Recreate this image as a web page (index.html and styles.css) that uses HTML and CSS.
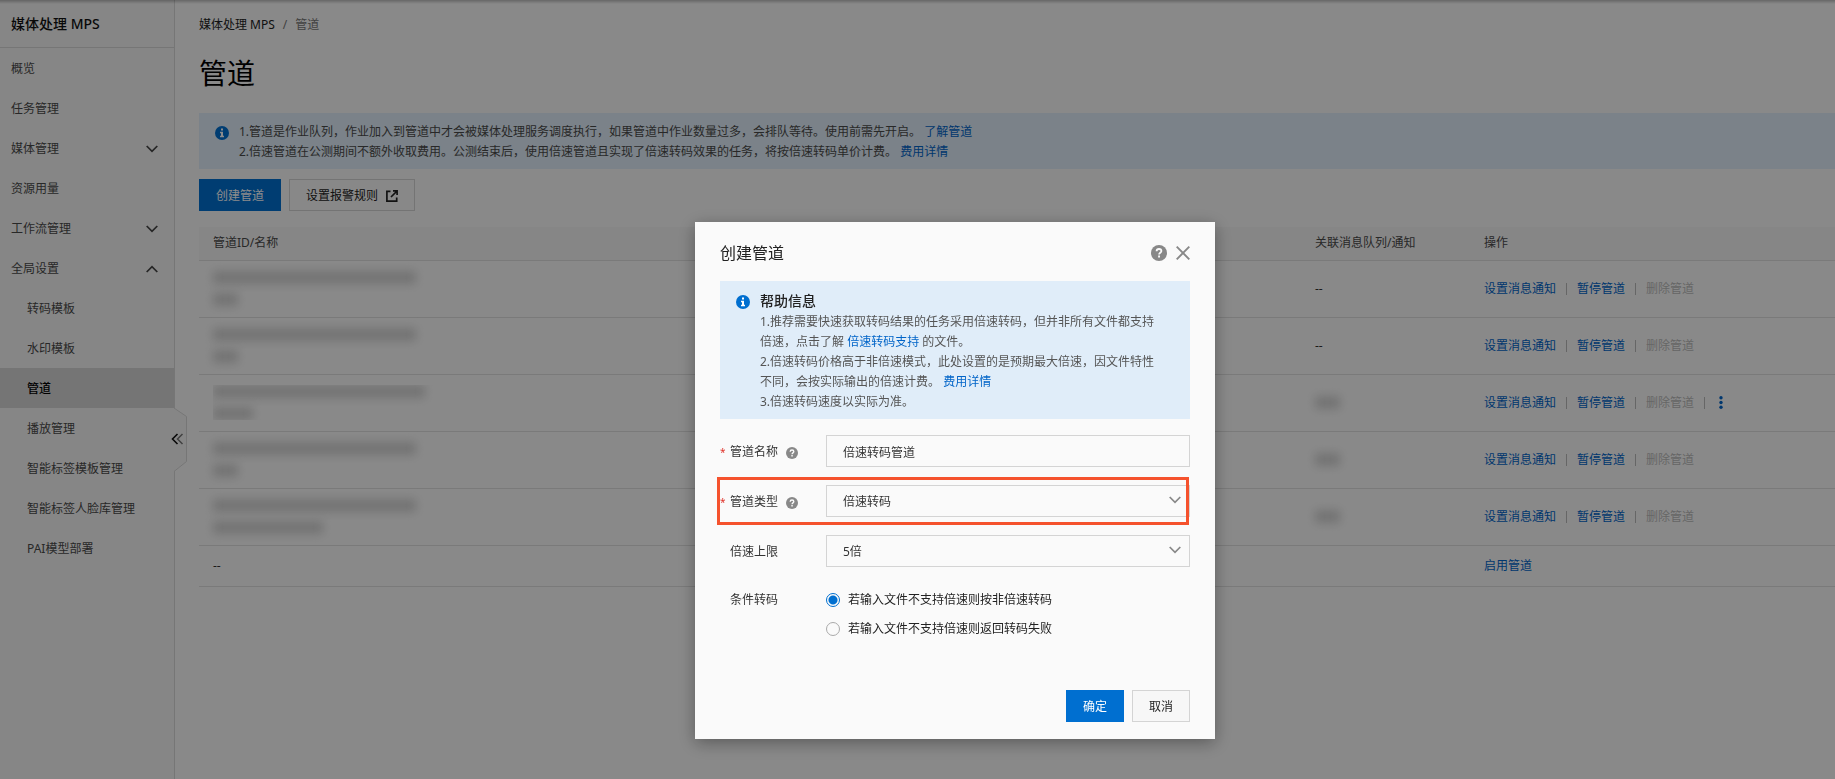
FILE: index.html
```html
<!DOCTYPE html>
<html lang="zh-CN">
<head>
<meta charset="utf-8">
<title>媒体处理 MPS - 管道</title>
<link rel="stylesheet" href="styles.css">
</head>
<body>
<svg class="defs" aria-hidden="true">
  <symbol id="i-down" viewBox="0 0 12 8"><path d="M.7 1 6 6.4 11.3 1" fill="none" stroke="currentColor" stroke-width="1.7"/></symbol>
  <symbol id="i-up" viewBox="0 0 12 8"><path d="M.7 7 6 1.6 11.3 7" fill="none" stroke="currentColor" stroke-width="1.7"/></symbol>
  <symbol id="i-info" viewBox="0 0 14 14"><circle cx="7" cy="7" r="7" fill="currentColor"/><path d="M6 2.6h2v2H6zM5 5.8h3v4h1v1.4H5V9.8h1V7.2H5z" fill="#fff"/></symbol>
  <symbol id="i-help" viewBox="0 0 16 16"><circle cx="8" cy="8" r="8" fill="currentColor"/><path d="M5.6 6.3C5.6 4.8 6.6 4 8 4s2.4.8 2.4 2.1c0 1.6-2.3 1.8-2.3 3.4" fill="none" stroke="#fafafa" stroke-width="1.8"/><path d="M7.1 10.6H9v1.9H7.1z" fill="#fafafa"/></symbol>
</svg>

<div class="page">
  <aside class="sidebar">
    <div class="brand">媒体处理 MPS</div>
    <nav class="menu">
      <a class="item" href="#">概览</a>
      <a class="item" href="#">任务管理</a>
      <a class="item" href="#">媒体管理<svg class="chevron"><use href="#i-down"/></svg></a>
      <a class="item" href="#">资源用量</a>
      <a class="item" href="#">工作流管理<svg class="chevron"><use href="#i-down"/></svg></a>
      <a class="item" href="#">全局设置<svg class="chevron"><use href="#i-up"/></svg></a>
      <a class="item sub" href="#">转码模板</a>
      <a class="item sub" href="#">水印模板</a>
      <a class="item sub active" href="#" aria-current="page">管道</a>
      <a class="item sub" href="#">播放管理</a>
      <a class="item sub" href="#">智能标签模板管理</a>
      <a class="item sub" href="#">智能标签人脸库管理</a>
      <a class="item sub" href="#">PAI模型部署</a>
    </nav>
    <button class="collapse" type="button" aria-label="收起菜单">
      <svg width="16" height="66" viewBox="0 0 16 66" fill="none">
        <path d="M0 1 12.500 9.500V54.500L0 64.500" fill="#f4f4f4" stroke="#d8d8d8"/>
        <path d="M3.500 27-1.500 32l5 5" stroke="#111" stroke-width="1.600"/>
        <path d="M8.500 27l-5 5 5 5" stroke="#777" stroke-width="1.500"/>
      </svg>
    </button>
  </aside>

  <main class="main">
    <nav class="crumbs"><a href="#">媒体处理 MPS</a><span class="slash">/</span><span class="current">管道</span></nav>
    <h1 class="title">管道</h1>

    <section class="notice">
      <svg class="info"><use href="#i-info"/></svg>
      <div>
        <p>1.管道是作业队列，作业加入到管道中才会被媒体处理服务调度执行，如果管道中作业数量过多，会排队等待。使用前需先开启。 <a class="link" href="#">了解管道</a></p>
        <p>2.倍速管道在公测期间不额外收取费用。公测结束后，使用倍速管道且实现了倍速转码效果的任务，将按倍速转码单价计费。 <a class="link" href="#">费用详情</a></p>
      </div>
    </section>

    <div class="toolbar">
      <button class="btn primary" type="button">创建管道</button>
      <button class="btn" type="button">设置报警规则
        <svg width="12" height="12" viewBox="0 0 12 12" fill="none" stroke="#222" stroke-width="1.700"><path d="M4.500 1.300H.9v9.800h9.800V7.500M5 7l6-6M7 .9h4.100V5"/></svg>
      </button>
    </div>

    <table class="table">
      <colgroup><col><col class="col-queue"><col class="col-ops"></colgroup>
      <thead><tr><th>管道ID/名称</th><th>关联消息队列/通知</th><th>操作</th></tr></thead>
      <tbody>
        <tr>
          <td><div class="masked"><i class="w-id"></i><i class="w-tag"></i></div></td>
          <td>--</td>
          <td><div class="ops"><a class="link" href="#">设置消息通知</a><a class="link" href="#">暂停管道</a><span class="off">删除管道</span></div></td>
        </tr>
        <tr>
          <td><div class="masked"><i class="w-id"></i><i class="w-tag"></i></div></td>
          <td>--</td>
          <td><div class="ops"><a class="link" href="#">设置消息通知</a><a class="link" href="#">暂停管道</a><span class="off">删除管道</span></div></td>
        </tr>
        <tr>
          <td><div class="masked cropped"><i class="w-long"></i><i class="w-short"></i></div></td>
          <td><div class="masked"><i class="w-tag"></i></div></td>
          <td><div class="ops"><a class="link" href="#">设置消息通知</a><a class="link" href="#">暂停管道</a><span class="off">删除管道</span><button class="more" type="button" aria-label="更多"><svg width="4" height="13" viewBox="0 0 4 13" fill="#0064c8"><circle cx="2" cy="1.700" r="1.700"/><circle cx="2" cy="6.500" r="1.700"/><circle cx="2" cy="11.300" r="1.700"/></svg></button></div></td>
        </tr>
        <tr>
          <td><div class="masked"><i class="w-id"></i><i class="w-tag"></i></div></td>
          <td><div class="masked"><i class="w-tag"></i></div></td>
          <td><div class="ops"><a class="link" href="#">设置消息通知</a><a class="link" href="#">暂停管道</a><span class="off">删除管道</span></div></td>
        </tr>
        <tr>
          <td><div class="masked"><i class="w-id"></i><i class="w-name"></i></div></td>
          <td><div class="masked"><i class="w-tag"></i></div></td>
          <td><div class="ops"><a class="link" href="#">设置消息通知</a><a class="link" href="#">暂停管道</a><span class="off">删除管道</span></div></td>
        </tr>
        <tr class="short">
          <td>--</td>
          <td></td>
          <td><div class="ops"><a class="link" href="#">启用管道</a></div></td>
        </tr>
      </tbody>
    </table>
  </main>
</div>

<div class="overlay">
  <form class="dialog" role="dialog" aria-labelledby="dialog-title">
    <header class="dialog-head">
      <h2 id="dialog-title">创建管道</h2>
      <button class="icon-btn" type="button" aria-label="帮助"><svg width="16" height="16"><use href="#i-help"/></svg></button>
      <button class="icon-btn" type="button" aria-label="关闭"><svg width="14" height="14" viewBox="0 0 14 14"><path d="M.7.7l12.600 12.600M13.300.7.7 13.300" stroke="currentColor" stroke-width="1.900"/></svg></button>
    </header>

    <section class="notice tips">
      <svg class="info"><use href="#i-info"/></svg>
      <div>
        <h3>帮助信息</h3>
        <p>1.推荐需要快速获取转码结果的任务采用倍速转码，但并非所有文件都支持倍速，点击了解 <a class="link" href="#">倍速转码支持</a> 的文件。</p>
        <p>2.倍速转码价格高于非倍速模式，此处设置的是预期最大倍速，因文件特性不同，会按实际输出的倍速计费。 <a class="link" href="#">费用详情</a></p>
        <p>3.倍速转码速度以实际为准。</p>
      </div>
    </section>

    <div class="field">
      <label class="label required" for="name">管道名称<svg class="help"><use href="#i-help"/></svg></label>
      <input class="control" id="name" type="text" value="倍速转码管道">
    </div>
    <div class="field highlighted">
      <label class="label required" for="type">管道类型<svg class="help"><use href="#i-help"/></svg></label>
      <div class="select"><select class="control" id="type"><option>倍速转码</option></select><svg class="chevron"><use href="#i-down"/></svg></div>
    </div>
    <div class="field">
      <label class="label" for="limit">倍速上限</label>
      <div class="select"><select class="control" id="limit"><option>5倍</option></select><svg class="chevron"><use href="#i-down"/></svg></div>
    </div>
    <div class="field choices" role="radiogroup" aria-labelledby="cond">
      <span class="label" id="cond">条件转码</span>
      <div>
        <label class="choice"><input type="radio" name="cond" checked>若输入文件不支持倍速则按非倍速转码</label>
        <label class="choice"><input type="radio" name="cond">若输入文件不支持倍速则返回转码失败</label>
      </div>
    </div>

    <footer class="dialog-foot">
      <button class="btn primary" type="submit">确定</button>
      <button class="btn" type="button">取消</button>
    </footer>
  </form>
</div>
</body>
</html>
```

FILE: styles.css
```css
* { box-sizing: border-box; }

body {
  margin: 0;
  background: #fafafa;
  color: #333;
  font: 12px/20px "Noto Sans", "Noto Sans CJK SC", sans-serif;
}

h1, h2, h3, p { margin: 0; font-weight: 400; }
a { color: inherit; text-decoration: none; }
button, input, select { font: inherit; color: inherit; }
svg { flex: none; }
.defs { position: absolute; width: 0; height: 0; }
.link { color: #0064c8; }

.page { display: flex; min-height: 100vh; }

/* Sidebar */
.sidebar {
  position: relative;
  flex: none;
  width: 175px;
  background: #f4f4f4;
  border-right: 1px solid #d8d8d8;
}
.brand {
  height: 48px;
  padding: 0 11px;
  border-bottom: 1px solid #d8d8d8;
  color: #111;
  font-size: 14px;
  font-weight: 500;
  line-height: 48px;
}
.item {
  display: flex;
  align-items: center;
  justify-content: space-between;
  height: 40px;
  padding: 2px 16px 0 11px;
  color: #4a4a4a;
}
.item.sub { padding-left: 27px; }
.item.active { background: #d6d6d6; color: #000; font-weight: 500; }
.chevron { width: 12px; height: 8px; color: #444; }
.collapse {
  position: absolute;
  top: 407px;
  left: 174px;
  width: 16px;
  height: 66px;
  padding: 0;
  border: 0;
  background: none;
}
.collapse svg { display: block; overflow: visible; }

/* Main column */
.main { flex: 1; min-width: 0; padding: 15px 0 0 24px; }
.crumbs { display: flex; gap: 8px; color: #222; }
.slash, .current { color: #777; }
.title { margin: 16px 0 17px; color: #000; font-size: 28px; line-height: 45px; }

.notice {
  display: flex;
  gap: 10px;
  padding: 9px 16px 7px;
  background: #e0edf9;
  color: #555;
}
.main .notice { color: #4a4a4a; }
.info { width: 14px; height: 14px; margin-top: 4px; color: #006fd0; }

.toolbar { display: flex; gap: 8px; margin: 10px 0 16px; }
.btn {
  display: flex;
  align-items: center;
  gap: 8px;
  height: 32px;
  padding: 1px 16px 0;
  border: 1px solid #d4d4d4;
  background: #f7f7f7;
  color: #222;
}
.btn.primary { border-color: #006fd0; background: #006fd0; color: #fff; }

.table { width: 100%; border-collapse: collapse; table-layout: fixed; }
.col-queue { width: 169px; }
.col-ops { width: 365px; }
.table th, .table td {
  height: 57px;
  padding: 0 14px;
  border-bottom: 1px solid #dedede;
  text-align: left;
  font-weight: 400;
}
.table th { height: 33px; background: #f4f4f4; color: #4a4a4a; }
.table .short td { height: 41px; }
.ops { display: flex; align-items: center; }
.ops > * + * { display: flex; margin-left: 10px; }
.ops > * + *::before {
  content: "";
  width: 1px;
  height: 12px;
  margin: 4px 10px 0 0;
  background: #bbb;
}
.off { color: #bbb; }
.more { align-items: center; padding: 0; border: 0; background: none; }
.more svg { margin-left: 4px; }
.ops .more::before { margin-top: 0; }

.masked { display: flex; flex-direction: column; gap: 9px; }
.masked i { height: 13px; background: #d2d2d2; filter: blur(5px); }
.cropped { overflow: hidden; }
.w-id { width: 203px; }
.w-long { width: 212px; }
.w-name { width: 110px; }
.w-short { width: 40px; }
.w-tag { width: 25px; }

/* Dialog */
.overlay {
  position: fixed;
  inset: 0;
  display: flex;
  align-items: flex-start;
  justify-content: center;
  padding: 222px 0 0 75px;
  background: linear-gradient(rgba(0, 0, 0, .25), rgba(0, 0, 0, 0) 4px) rgba(0, 0, 0, .45);
}
.dialog {
  display: flex;
  flex-direction: column;
  gap: 18px;
  width: 520px;
  padding: 0 25px 17px;
  background: #fafafa;
  box-shadow: 0 4px 16px rgba(0, 0, 0, .35);
}
.dialog-head { display: flex; align-items: center; gap: 9px; height: 41px; padding-top: 20px; }
.dialog-head h2 { flex: 1; color: #222; font-size: 16px; }
.icon-btn { display: flex; padding: 0; border: 0; background: none; color: #888; }
.tips { margin-bottom: -2px; padding: 8px 32px 7px 16px; }
.tips .info { margin-top: 6px; }
.tips h3 { color: #222; font-size: 14px; font-weight: 500; line-height: 23px; }

.field { position: relative; display: flex; align-items: center; }
.label { display: flex; align-items: center; width: 106px; padding: 2px 0 0 10px; flex: none; }
.required::before { content: "*"; width: 10px; margin-left: -10px; color: #e0342b; font-size: 10px; }
.help { width: 12px; height: 12px; margin: 1px 0 0 8px; color: #888; }
.control {
  width: 100%;
  height: 32px;
  padding: 1px 16px 0;
  border: 1px solid #d4d4d4;
  border-radius: 0;
  background: #fafafa;
  appearance: none;
}
.select { position: relative; flex: 1; }
.select .chevron { position: absolute; top: 11px; right: 9px; color: #888; pointer-events: none; }
.highlighted::after {
  content: "";
  position: absolute;
  inset: -8px 1px -8px -3px;
  border: 3px solid #f5522d;
  pointer-events: none;
}
.choices { align-items: flex-start; line-height: 29px; }
.choices .label { padding-top: 0; }
.choice { display: flex; align-items: center; gap: 8px; color: #222; }
.choice input {
  width: 14px;
  height: 14px;
  margin: 0;
  border: 1px solid #aaa;
  border-radius: 50%;
  background: #fafafa;
  appearance: none;
}
.choice input:checked { border-color: #006fd0; background: radial-gradient(#006fd0 4px, #fafafa 5px); }

.dialog-foot { display: flex; justify-content: flex-end; gap: 8px; margin-top: 29px; }
```
